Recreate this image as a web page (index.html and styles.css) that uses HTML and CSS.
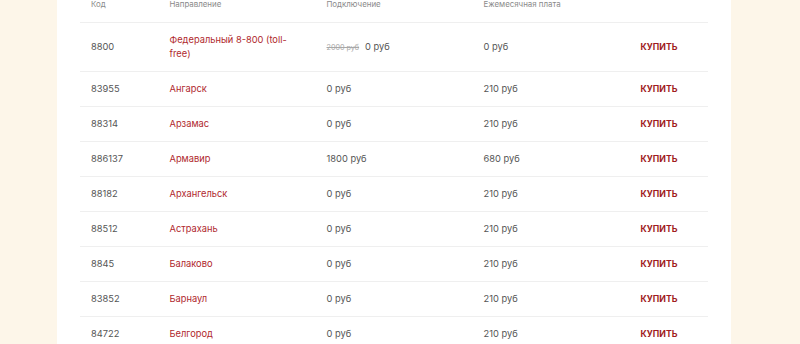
FILE: index.html
```html
<!DOCTYPE html>
<html lang="ru">
<head>
<meta charset="utf-8">
<title>Номера</title>
<link rel="stylesheet" href="styles.css">
</head>
<body>
<div class="page">
  <div class="card">
    <div class="table">
      <div class="row head">
        <div class="cell">Код</div>
        <div class="cell">Направление</div>
        <div class="cell">Подключение</div>
        <div class="cell">Ежемесячная плата</div>
        <div class="cell"></div>
      </div>
      <div class="row">
        <div class="cell">8800</div>
        <div class="cell"><a class="city">Федеральный 8-800 (toll-free)</a></div>
        <div class="cell"><span class="old">2000 руб</span>0 руб</div>
        <div class="cell">0 руб</div>
        <div class="cell"><a class="buy">КУПИТЬ</a></div>
      </div>
      <div class="row">
        <div class="cell">83955</div>
        <div class="cell"><a class="city">Ангарск</a></div>
        <div class="cell">0 руб</div>
        <div class="cell">210 руб</div>
        <div class="cell"><a class="buy">КУПИТЬ</a></div>
      </div>
      <div class="row">
        <div class="cell">88314</div>
        <div class="cell"><a class="city">Арзамас</a></div>
        <div class="cell">0 руб</div>
        <div class="cell">210 руб</div>
        <div class="cell"><a class="buy">КУПИТЬ</a></div>
      </div>
      <div class="row">
        <div class="cell">886137</div>
        <div class="cell"><a class="city">Армавир</a></div>
        <div class="cell">1800 руб</div>
        <div class="cell">680 руб</div>
        <div class="cell"><a class="buy">КУПИТЬ</a></div>
      </div>
      <div class="row">
        <div class="cell">88182</div>
        <div class="cell"><a class="city">Архангельск</a></div>
        <div class="cell">0 руб</div>
        <div class="cell">210 руб</div>
        <div class="cell"><a class="buy">КУПИТЬ</a></div>
      </div>
      <div class="row">
        <div class="cell">88512</div>
        <div class="cell"><a class="city">Астрахань</a></div>
        <div class="cell">0 руб</div>
        <div class="cell">210 руб</div>
        <div class="cell"><a class="buy">КУПИТЬ</a></div>
      </div>
      <div class="row">
        <div class="cell">8845</div>
        <div class="cell"><a class="city">Балаково</a></div>
        <div class="cell">0 руб</div>
        <div class="cell">210 руб</div>
        <div class="cell"><a class="buy">КУПИТЬ</a></div>
      </div>
      <div class="row">
        <div class="cell">83852</div>
        <div class="cell"><a class="city">Барнаул</a></div>
        <div class="cell">0 руб</div>
        <div class="cell">210 руб</div>
        <div class="cell"><a class="buy">КУПИТЬ</a></div>
      </div>
      <div class="row">
        <div class="cell">84722</div>
        <div class="cell"><a class="city">Белгород</a></div>
        <div class="cell">0 руб</div>
        <div class="cell">210 руб</div>
        <div class="cell"><a class="buy">КУПИТЬ</a></div>
      </div>
    </div>
  </div>
</div>
</body>
</html>
```
FILE: styles.css
```css
html, body {
  margin: 0;
  padding: 0;
  background: #fdf6e9;
  height: 100%;
  overflow: hidden;
}
body {
  font-family: Inter, "Noto Sans", "DejaVu Sans", sans-serif;
  font-size: 9.3px;
  color: #555;
}
.page {
  padding-left: 57px;
}
.card {
  width: 674px;
  background: #fff;
  padding: 0 23px;
  box-sizing: border-box;
  min-height: 400px;
}
.table {
  display: flex;
  flex-direction: column;
}
.row {
  display: grid;
  grid-template-columns: 1fr 2fr 2fr 2fr 1fr;
  border-bottom: 1px solid #efefef;
}
.cell {
  padding: 10px 11px;
  line-height: 14px;
  align-self: center;
}
.head .cell {
  padding: 0 11px 14px;
  line-height: 8px;
  font-size: 7.9px;
  color: #8a8a8a;
}
.city {
  color: #b0282d;
  text-decoration: none;
}
.buy {
  color: #a01b22;
  font-weight: 700;
  font-size: 8.7px;
  text-decoration: none;
}
.old {
  font-size: 7.2px;
  color: #a8a8a8;
  text-decoration: line-through;
  margin-right: 6px;
}
```
